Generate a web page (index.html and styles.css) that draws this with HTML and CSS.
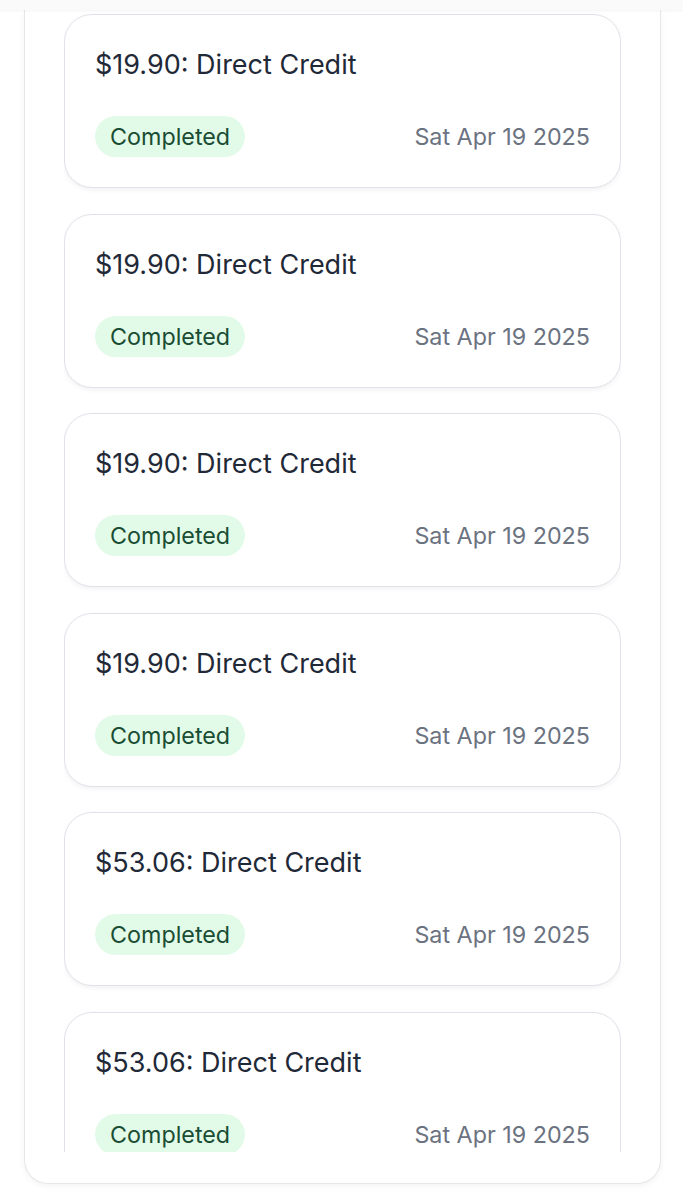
FILE: index.html
```html
<!DOCTYPE html>
<html lang="en">
<head>
<meta charset="utf-8">
<title>Transactions</title>
<link rel="stylesheet" href="styles.css">
</head>
<body>
<div class="topbar"></div>
<div class="panel">
  <div class="scroller">
    <div class="list">
      <div class="card">
        <div class="title">$19.90: Direct Credit</div>
        <div class="row"><span class="badge">Completed</span><span class="date">Sat Apr 19 2025</span></div>
      </div>
      <div class="card">
        <div class="title">$19.90: Direct Credit</div>
        <div class="row"><span class="badge">Completed</span><span class="date">Sat Apr 19 2025</span></div>
      </div>
      <div class="card">
        <div class="title">$19.90: Direct Credit</div>
        <div class="row"><span class="badge">Completed</span><span class="date">Sat Apr 19 2025</span></div>
      </div>
      <div class="card">
        <div class="title">$19.90: Direct Credit</div>
        <div class="row"><span class="badge">Completed</span><span class="date">Sat Apr 19 2025</span></div>
      </div>
      <div class="card">
        <div class="title">$53.06: Direct Credit</div>
        <div class="row"><span class="badge">Completed</span><span class="date">Sat Apr 19 2025</span></div>
      </div>
      <div class="card">
        <div class="title">$53.06: Direct Credit</div>
        <div class="row"><span class="badge">Completed</span><span class="date">Sat Apr 19 2025</span></div>
      </div>
    </div>
  </div>
</div>
</body>
</html>
```
FILE: styles.css
```css
* { box-sizing: border-box; }
html, body { margin: 0; padding: 0; background: #ffffff; }
body {
  font-family: Inter, "Noto Sans", sans-serif;
  width: 683px;
  height: 1200px;
  overflow: hidden;
}
.topbar {
  height: 10px;
  background: #fafafa;
  box-shadow: 0 1px 3px rgba(0, 0, 0, 0.05);
  position: relative;
  z-index: 2;
}
.panel {
  margin: 0 22px 0 24px;
  border: 1px solid #e5e7eb;
  border-top: none;
  border-radius: 0 0 24px 24px;
  padding: 0 39px 31px 39px;
  box-shadow: 0 2px 6px rgba(0, 0, 0, 0.05);
  background: #ffffff;
}
.scroller {
  height: 1142px;
  overflow: hidden;
}
.list {
  display: flex;
  flex-direction: column;
  gap: 25.6px;
  padding-top: 4px;
}
.card {
  flex: none;
  height: 174px;
  border: 1px solid #dfe3e9;
  border-radius: 28px;
  padding: 32px 30px 30px 30px;
  display: flex;
  flex-direction: column;
  gap: 33px;
  box-shadow: 0 2px 5px rgba(0, 0, 0, 0.06);
  background: #ffffff;
}
.title {
  font-size: 27px;
  line-height: 36px;
  color: #1f2937;
}
.row {
  display: flex;
  align-items: center;
  justify-content: space-between;
  height: 41px;
}
.badge {
  height: 41px;
  line-height: 41px;
  padding: 0 15px;
  border-radius: 21px;
  background: #e2fbe8;
  color: #1a4d34;
  font-size: 23.3px;
}
.date {
  font-size: 23.3px;
  color: #6b7280;
}
```
